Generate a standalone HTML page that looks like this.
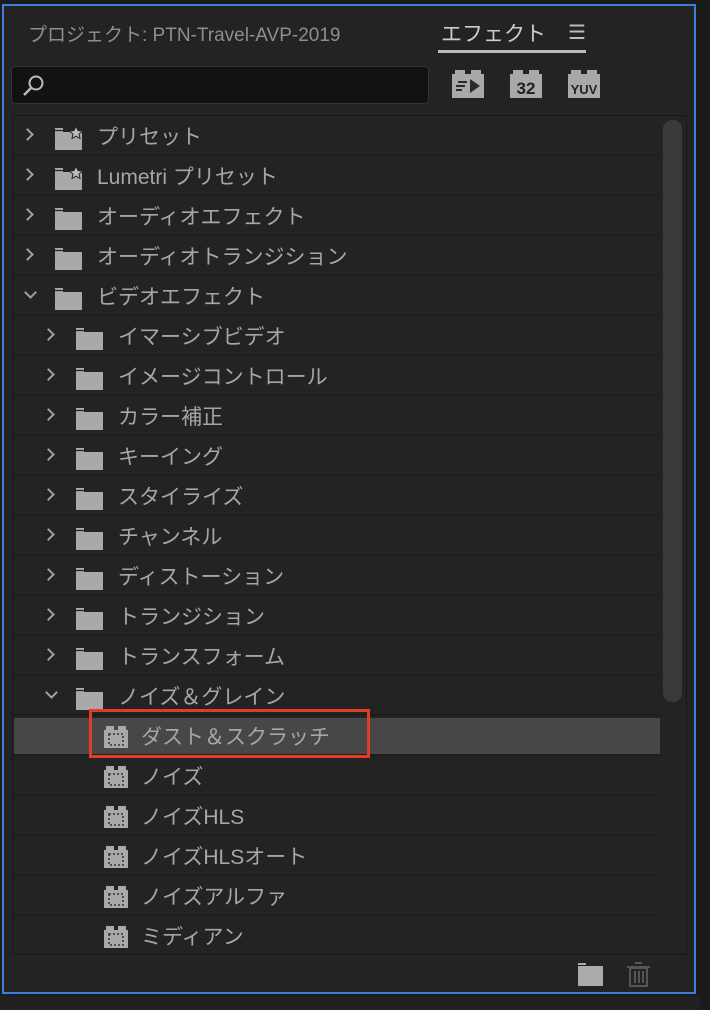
<!DOCTYPE html><html><head><meta charset="utf-8"><style>
*{margin:0;padding:0;box-sizing:border-box}
body{width:710px;height:1010px;background:#1b1b1b;font-family:"Liberation Sans","Noto Sans CJK JP",sans-serif;overflow:hidden;position:relative}
.panel{position:absolute;left:2px;top:4px;width:694px;height:990px;border:2px solid #3d7fd6;background:#232323}
.abs{position:absolute}
.list{position:absolute;left:12px;top:115px;width:675px;height:840px;border:1px solid #181818;background:#232323;overflow:hidden}
.row{position:absolute;left:0;width:647px;height:40px;border-bottom:2px solid #1e1e1e;color:#a6a6a6;font-size:21px;line-height:40px}
.row span{position:absolute;top:2px}
.chev{position:absolute;top:14px;width:9px;height:9px;border-right:2px solid #a0a0a0;border-bottom:2px solid #a0a0a0}
.fold{position:absolute;top:10px;width:30px;height:26px}
</style></head><body>
<div class="panel"></div>
<div class="abs" style="left:28px;top:20px;font-size:19px;color:#8e8e8e">プロジェクト: PTN-Travel-AVP-2019</div>
<div class="abs" style="left:441px;top:18px;font-size:21px;color:#cdcdcd">エフェクト</div>
<div class="abs" style="left:568px;top:20px;font-size:20px;color:#bbb">☰</div>
<div class="abs" style="left:438px;top:50px;width:148px;height:3px;background:#bdbdbd"></div>
<div class="abs" style="left:11px;top:66px;width:418px;height:38px;background:#121212;border:1px solid #333;border-radius:4px"></div>
<svg class="abs" style="left:20px;top:72px" width="28" height="28"><circle cx="16" cy="11" r="6.5" fill="none" stroke="#bbb" stroke-width="2"/><line x1="11" y1="16" x2="4" y2="23" stroke="#bbb" stroke-width="2.5"/></svg>
<svg class="abs" style="left:452px;top:70px" width="150" height="30">
<g fill="#a9a9a9"><rect x="0" y="4" width="32" height="24"/><rect x="3" y="0" width="10" height="6"/><rect x="19" y="0" width="10" height="6"/>
<rect x="58" y="4" width="32" height="24"/><rect x="61" y="0" width="10" height="6"/><rect x="77" y="0" width="10" height="6"/>
<rect x="116" y="4" width="32" height="24"/><rect x="119" y="0" width="10" height="6"/><rect x="135" y="0" width="10" height="6"/></g>
<polygon points="18,9 28,16 18,23" fill="#2a2a2a"/><rect x="6" y="11" width="9" height="2" fill="#2a2a2a"/><rect x="4" y="15" width="9" height="2" fill="#2a2a2a"/><rect x="4" y="19" width="6" height="2" fill="#2a2a2a"/>
<text x="74" y="24" font-size="17" text-anchor="middle" fill="#222" font-family="Liberation Sans" font-weight="bold">32</text>
<text x="132" y="24" font-size="13" text-anchor="middle" fill="#222" font-family="Liberation Sans" font-weight="bold">YUV</text>
</svg>
<div class="list">
<div class="abs" style="left:650px;top:4px;width:19px;height:582px;background:#3a3a3a;border-radius:9px"></div>
<div class="abs" style="left:1px;top:602px;width:646px;height:38px;background:#474747"></div>
<div id="rows"></div>
</div>
<div class="abs" style="left:89px;top:709px;width:281px;height:49px;border:3px solid #e23c22"></div>
<svg class="abs" style="left:577px;top:962px" width="80" height="26"><path d="M1 1h8v3h17v20H1z" fill="#aaa"/><line x1="1" y1="3.5" x2="9" y2="3.5" stroke="#232323"/><g fill="none" stroke="#555" stroke-width="2"><rect x="53" y="6" width="17" height="18"/><line x1="50" y1="5" x2="73" y2="5"/><line x1="58" y1="1" x2="65" y2="1"/><line x1="58" y1="9" x2="58" y2="21"/><line x1="62" y1="9" x2="62" y2="21"/><line x1="66" y1="9" x2="66" y2="21"/></g></svg>
<div class="abs" style="left:0;top:996px;width:700px;height:14px;background:#202020"></div>
<script>
var items=[[0,'f','プリセット',1],[0,'f','Lumetri プリセット',1],[0,'f','オーディオエフェクト'],[0,'f','オーディオトランジション'],[0,'o','ビデオエフェクト'],
[1,'f','イマーシブビデオ'],[1,'f','イメージコントロール'],[1,'f','カラー補正'],[1,'f','キーイング'],[1,'f','スタイライズ'],[1,'f','チャンネル'],[1,'f','ディストーション'],[1,'f','トランジション'],[1,'f','トランスフォーム'],[1,'o','ノイズ＆グレイン'],
[2,'e','ダスト＆スクラッチ'],[2,'e','ノイズ'],[2,'e','ノイズHLS'],[2,'e','ノイズHLSオート'],[2,'e','ノイズアルファ'],[2,'e','ミディアン']];
var h='';items.forEach(function(it,i){var l=it[0],top=i*40,x=l*21;h+='<div class="row" style="top:'+top+'px">';
if(it[1]!='e'){h+=it[1]=='f'?'<div class="chev" style="left:'+(10+x)+'px;transform:rotate(-45deg)"></div>':'<div class="chev" style="left:'+(13+x)+'px;top:12px;transform:rotate(45deg)"></div>';
h+='<svg class="fold" style="left:'+(41+x)+'px" width="30" height="26"><path d="M1 2h8v4h19v18H1z" fill="#a9a9a9"/><line x1="1" y1="4.5" x2="9" y2="4.5" stroke="#232323" stroke-width="1.2"/>'+(it[3]?'<path d="M22 0l2 4.5 4.5.5-3.5 3 1 4.5-4-2.3-4 2.3 1-4.5-3.5-3 4.5-.5z" fill="#bbb" stroke="#232323"/>':'')+'</svg>';
h+='<span style="left:'+(84+x)+'px">'+it[2]+'</span>';}
else{h+='<svg class="abs" style="left:91px;top:10px" width="26" height="24"><rect x="0" y="4" width="24" height="18" fill="#a9a9a9"/><rect x="2" y="0" width="8" height="6" fill="#a9a9a9"/><rect x="14" y="0" width="8" height="6" fill="#a9a9a9"/><rect x="5" y="8" width="14" height="11" fill="none" stroke="#333" stroke-width="1.5" stroke-dasharray="2 2"/></svg><span style="left:128px">'+it[2]+'</span>';}
h+='</div>';});
document.getElementById('rows').innerHTML=h;
</script>
</body></html>
